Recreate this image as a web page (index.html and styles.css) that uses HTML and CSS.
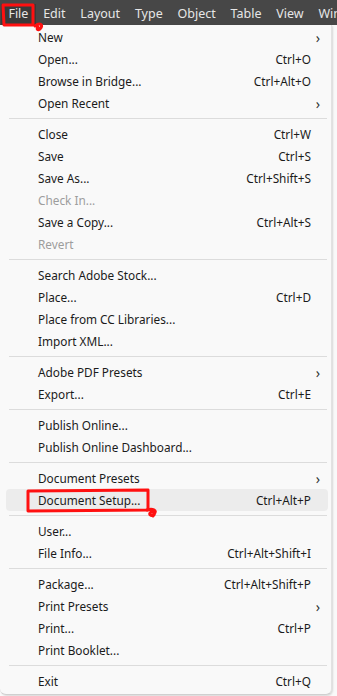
FILE: index.html
```html
<!DOCTYPE html>
<html lang="en">
<head>
  <meta charset="UTF-8" />
  <title>File menu</title>
  <link rel="stylesheet" href="styles.css">
</head>
<body>

  <!-- BARRA DE MENU -->
  <div class="menubar">
    <span class="mb-item mb-file">File</span>
    <span class="mb-item">Edit</span>
    <span class="mb-item">Layout</span>
    <span class="mb-item">Type</span>
    <span class="mb-item">Object</span>
    <span class="mb-item">Table</span>
    <span class="mb-item">View</span>
    <span class="mb-item">Win</span>
  </div>

  <!-- MENU FILE -->
  <div class="menu">
    <div class="item"><span>New</span><span class="sub">&#x203A;</span></div>
    <div class="item"><span>Open...</span><span class="key">Ctrl+O</span></div>
    <div class="item"><span>Browse in Bridge...</span><span class="key">Ctrl+Alt+O</span></div>
    <div class="item"><span>Open Recent</span><span class="sub">&#x203A;</span></div>
    <div class="sep"></div>
    <div class="item"><span>Close</span><span class="key">Ctrl+W</span></div>
    <div class="item"><span>Save</span><span class="key">Ctrl+S</span></div>
    <div class="item"><span>Save As...</span><span class="key">Ctrl+Shift+S</span></div>
    <div class="item off"><span>Check In...</span></div>
    <div class="item"><span>Save a Copy...</span><span class="key">Ctrl+Alt+S</span></div>
    <div class="item off"><span>Revert</span></div>
    <div class="sep"></div>
    <div class="item"><span>Search Adobe Stock...</span></div>
    <div class="item"><span>Place...</span><span class="key">Ctrl+D</span></div>
    <div class="item"><span>Place from CC Libraries...</span></div>
    <div class="item"><span>Import XML...</span></div>
    <div class="sep"></div>
    <div class="item"><span>Adobe PDF Presets</span><span class="sub">&#x203A;</span></div>
    <div class="item"><span>Export...</span><span class="key">Ctrl+E</span></div>
    <div class="sep"></div>
    <div class="item"><span>Publish Online...</span></div>
    <div class="item"><span>Publish Online Dashboard...</span></div>
    <div class="sep"></div>
    <div class="item"><span>Document Presets</span><span class="sub">&#x203A;</span></div>
    <div class="item hover"><span>Document Setup...</span><span class="key">Ctrl+Alt+P</span></div>
    <div class="sep"></div>
    <div class="item"><span>User...</span></div>
    <div class="item"><span>File Info...</span><span class="key">Ctrl+Alt+Shift+I</span></div>
    <div class="sep"></div>
    <div class="item"><span>Package...</span><span class="key">Ctrl+Alt+Shift+P</span></div>
    <div class="item"><span>Print Presets</span><span class="sub">&#x203A;</span></div>
    <div class="item"><span>Print...</span><span class="key">Ctrl+P</span></div>
    <div class="item"><span>Print Booklet...</span></div>
    <div class="sep"></div>
    <div class="item"><span>Exit</span><span class="key">Ctrl+Q</span></div>
  </div>

  <!-- MARCAS VERMELHAS -->
  <svg class="marks" width="337" height="696" viewBox="0 0 337 696">
    <path d="M3 5 L33 5 L33 25 L4 25 Z" />
    <path d="M35 26 C40 22 44 25 40 29 C38 31 36 29 38 27" />
    <path d="M28 491 L148 490 L148 510 L28 511 Z" />
    <path d="M147 510 C152 508 158 510 154 514 C151 517 148 514 151 512 C154 511 156 513 153 516" />
  </svg>

</body>
</html>
```

FILE: styles.css
```css
body {
  margin: 0;
  padding: 0;
  width: 337px;
  height: 696px;
  overflow: hidden;
  background: #f9f9f9;
  font-family: 'Noto Sans', 'Open Sans', sans-serif;
  position: relative;
}

.menubar {
  height: 25px;
  background: #474747;
  display: flex;
  align-items: flex-end;
  white-space: nowrap;
  overflow: hidden;
  padding-left: 1px;
  box-sizing: border-box;
}

.mb-item {
  color: #e6e6e6;
  font-size: 12.5px;
  padding: 0 7.4px 1px;
  line-height: 20px;
}

.mb-file {
  background: #3a3a3a;
}

.menu {
  width: 332px;
  box-sizing: border-box;
  background: #f9f9f9;
  border-right: 1px solid #e2e2e2;
  border-bottom: 1px solid #d0d0d0;
  border-radius: 0 0 6px 6px;
  box-shadow: 1px 1px 2px #00000022;
  padding: 1px 0 2px;
}

.item {
  height: 22px;
  display: flex;
  align-items: center;
  padding: 0 18px 0 36px;
  margin: 0 2px;
  font-size: 11.8px;
  color: #1b1b1b;
  border-radius: 4px;
}

.item span:first-child {
  flex: 1;
}

.item.off {
  color: #9d9d9d;
}

.item.hover {
  background: #ececec;
  margin: 0 3px 0 6px;
  padding-left: 32px;
  padding-right: 17px;
}

.key {
  text-align: right;
}

.sub {
  margin-right: -9px;
  font-size: 14px;
  color: #333;
}

.sep {
  height: 1px;
  background: #dcdcdc;
  margin: 4px 4px 4px 9px;
}

.marks {
  position: absolute;
  top: 0;
  left: 0;
  pointer-events: none;
}

.marks path {
  fill: none;
  stroke: #ff1010;
  stroke-width: 3;
  stroke-linejoin: round;
  stroke-linecap: round;
}
```
